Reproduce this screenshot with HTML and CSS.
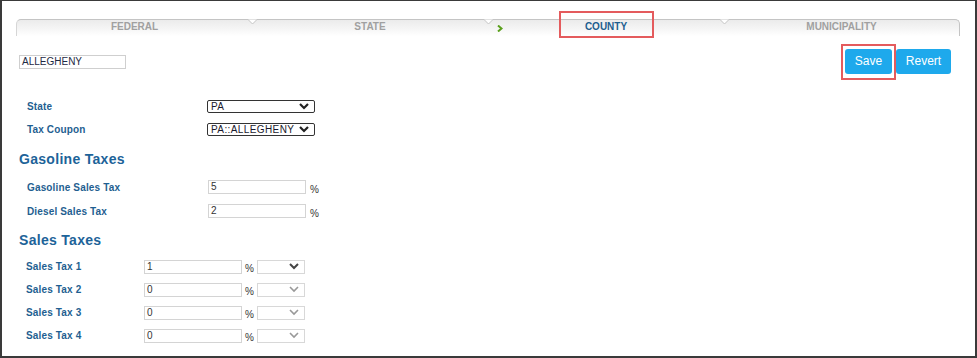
FILE: index.html
```html
<!DOCTYPE html>
<html>
<head>
<meta charset="utf-8">
<link rel="stylesheet" href="styles.css">
</head>
<body>
<div class="frame">
  <div class="tabs">
    <div class="tab tab-first">FEDERAL</div>
    <div class="tab"><svg class="notch" width="9" height="6" viewBox="0 0 9 6"><path d="M0 0.5 L4.5 5 L9 0.5" fill="#fff" stroke="#c4c4c4" stroke-width="1"/></svg>STATE</div>
    <div class="tab tab-active"><svg class="notch" width="9" height="6" viewBox="0 0 9 6"><path d="M0 0.5 L4.5 5 L9 0.5" fill="#fff" stroke="#c4c4c4" stroke-width="1"/></svg><svg class="arrow" width="6" height="7" viewBox="0 0 6 7"><path d="M1 0.5 L4.5 3.5 L1 6.5" fill="none" stroke="#5aa01c" stroke-width="2"/></svg>COUNTY</div>
    <div class="tab tab-last"><svg class="notch" width="9" height="6" viewBox="0 0 9 6"><path d="M0 0.5 L4.5 5 L9 0.5" fill="#fff" stroke="#c4c4c4" stroke-width="1"/></svg>MUNICIPALITY</div>
  </div>

  <div class="toolbar">
    <div class="name-input">ALLEGHENY</div>
    <div class="buttons">
      <div class="btn btn-save">Save</div>
      <div class="btn btn-revert">Revert</div>
    </div>
  </div>

  <div class="rows rows-top">
    <div class="row">
      <div class="label label-wide">State</div>
      <div class="select select-dark"><span>PA</span><svg width="10" height="7" viewBox="0 0 10 7"><path d="M1 1 L5 5 L9 1" fill="none" stroke="#222" stroke-width="2.2"/></svg></div>
    </div>
    <div class="row">
      <div class="label label-wide">Tax Coupon</div>
      <div class="select select-dark"><span>PA::ALLEGHENY</span><svg width="10" height="7" viewBox="0 0 10 7"><path d="M1 1 L5 5 L9 1" fill="none" stroke="#222" stroke-width="2.2"/></svg></div>
    </div>
  </div>

  <h2 class="heading heading-gas">Gasoline Taxes</h2>
  <div class="rows rows-gas">
    <div class="row row-24">
      <div class="label label-gas">Gasoline Sales Tax</div>
      <div class="field">5</div><span class="pct">%</span>
    </div>
    <div class="row row-24">
      <div class="label label-gas">Diesel Sales Tax</div>
      <div class="field">2</div><span class="pct">%</span>
    </div>
  </div>

  <h2 class="heading heading-sales">Sales Taxes</h2>
  <div class="rows rows-sales">
    <div class="row">
      <div class="label label-sales">Sales Tax 1</div>
      <div class="field">1</div><span class="pct pct-sales">%</span>
      <div class="select select-light"><svg width="10" height="7" viewBox="0 0 10 7"><path d="M1 1 L5 5 L9 1" fill="none" stroke="#444" stroke-width="2"/></svg></div>
    </div>
    <div class="row">
      <div class="label label-sales">Sales Tax 2</div>
      <div class="field">0</div><span class="pct pct-sales">%</span>
      <div class="select select-light"><svg width="10" height="7" viewBox="0 0 10 7"><path d="M1 1 L5 5 L9 1" fill="none" stroke="#999" stroke-width="1.6"/></svg></div>
    </div>
    <div class="row">
      <div class="label label-sales">Sales Tax 3</div>
      <div class="field">0</div><span class="pct pct-sales">%</span>
      <div class="select select-light"><svg width="10" height="7" viewBox="0 0 10 7"><path d="M1 1 L5 5 L9 1" fill="none" stroke="#999" stroke-width="1.6"/></svg></div>
    </div>
    <div class="row">
      <div class="label label-sales">Sales Tax 4</div>
      <div class="field">0</div><span class="pct pct-sales">%</span>
      <div class="select select-light"><svg width="10" height="7" viewBox="0 0 10 7"><path d="M1 1 L5 5 L9 1" fill="none" stroke="#999" stroke-width="1.6"/></svg></div>
    </div>
  </div>

  <div class="mark mark-county"></div>
  <div class="mark mark-save"></div>
</div>
</body>
</html>
```

FILE: styles.css
```css
* { box-sizing: border-box; }
html, body { margin: 0; padding: 0; background: #fff; }
body { font-family: "Liberation Sans", Arial, sans-serif; }

.frame {
  position: relative;
  width: 977px;
  height: 358px;
  border: 1px solid #3a3a3a;
  border-left-width: 2px;
  border-bottom-width: 2px;
  border-right-width: 2px;
  overflow: hidden;
}

.tabs {
  display: flex;
  width: 944px;
  height: 17px;
  margin: 18px 0 0 14px;
}
.tab {
  position: relative;
  width: 236px;
  height: 17px;
  border-top: 1px solid #c4c4c4;
  background: linear-gradient(#ebebeb, #f6f6f6 60%, #fff);
  font-size: 10px;
  font-weight: bold;
  color: #a0a0a0;
  text-align: center;
  line-height: 14px;
}
.tab-first { border-top-left-radius: 5px; border-left: 1px solid #d6d6d6; }
.tab-last { border-top-right-radius: 5px; border-right: 1px solid #c4c4c4; }
.tab-active { color: #1d5e8f; }
.notch { position: absolute; left: -4px; top: -1px; }
.arrow { position: absolute; left: 9px; top: 5px; }

.toolbar {
  display: flex;
  justify-content: space-between;
  align-items: flex-start;
  margin-top: 13px;
  padding: 0 24px 0 17px;
}
.name-input {
  width: 107px;
  height: 14px;
  margin-top: 6px;
  border: 1px solid #cfcfcf;
  font-size: 10px;
  line-height: 12px;
  padding-left: 2px;
  color: #1e2a44;
}
.buttons { display: flex; gap: 4px; }
.btn {
  height: 25px;
  background: #1ea9ec;
  color: #fff;
  font-size: 12px;
  line-height: 25px;
  text-align: center;
  border-radius: 3px;
}
.btn-save { width: 47px; }
.btn-revert { width: 55px; }

.rows-top { margin-top: 21px; }
.row {
  display: flex;
  align-items: center;
  height: 23px;
}
.row-24 { height: 24px; }
.label {
  font-size: 10px;
  font-weight: bold;
  color: #1f5f91;
  letter-spacing: 0.15px;
}
.label-wide { width: 205px; padding-left: 25px; }
.label-gas { width: 206px; padding-left: 25px; }
.label-sales { width: 142px; padding-left: 24px; }

.select {
  display: flex;
  align-items: center;
  justify-content: space-between;
  height: 13px;
  padding: 0 5px 0 3px;
  font-size: 10px;
  color: #1a1a2e;
}
.select-dark {
  width: 108px;
  border: 1px solid #333;
  border-radius: 2px;
  letter-spacing: 0.4px;
}
.select-light {
  width: 48px;
  height: 14px;
  border: 1px solid #d8d8d8;
  justify-content: flex-end;
}

.heading {
  margin: 0;
  padding-left: 17px;
  font-size: 14px;
  font-weight: bold;
  color: #1d6399;
  line-height: 18px;
  letter-spacing: 0.3px;
}
.heading-gas { margin-top: 9px; }
.rows-gas { margin-top: 7px; }
.heading-sales { margin-top: 8px; }
.rows-sales { margin-top: 6px; }

.field {
  width: 98px;
  height: 14px;
  border: 1px solid #d4d4d4;
  font-size: 10px;
  line-height: 12px;
  padding-left: 2px;
  color: #333;
}
.pct {
  font-size: 10px;
  color: #333;
  margin-left: 4px;
  margin-top: 4px;
}
.pct-sales { margin-left: 3px; width: 12px; }

.mark {
  position: absolute;
  border: 2px solid #e45b5d;
}
.mark-county { left: 557px; top: 10px; width: 95px; height: 27px; }
.mark-save { left: 839px; top: 43px; width: 55px; height: 36px; }
```
